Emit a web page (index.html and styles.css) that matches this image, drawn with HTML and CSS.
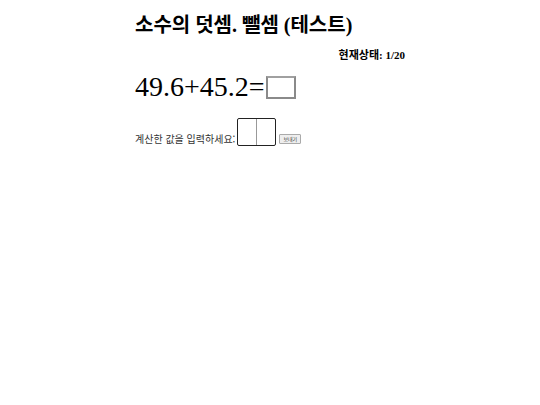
FILE: index.html
```html
<!DOCTYPE html>
<html lang="ko">
<head>
<meta charset="utf-8">
<title>소수의 덧셈. 뺄셈 (테스트)</title>
<link rel="stylesheet" href="styles.css">
</head>
<body>
<div class="wrap">
  <h1 class="title">소수의 덧셈. 뺄셈 (테스트)</h1>
  <div class="status">현재상태: 1/20</div>
  <div class="problem">49.6+45.2=<span class="blank"></span></div>
  <form class="answer">
    <label class="label">계산한 값을 입력하세요:</label>
    <span class="field"><span class="cell"></span><span class="cell"></span></span>
    <button type="button" class="send">보내기</button>
  </form>
</div>
</body>
</html>
```
FILE: styles.css
```css
body {
  margin: 8px;
  font-family: "Liberation Serif", "Noto Sans CJK KR", serif;
  background: #fff;
  color: #000;
}
.wrap {
  width: 270px;
  margin: 0 auto;
}
.title {
  font-size: 20px;
  font-weight: bold;
  margin: 2px 0 0;
  line-height: 30px;
}
.status {
  text-align: right;
  font-size: 11px;
  font-weight: bold;
  margin-top: 8px;
  line-height: 14px;
}
.problem {
  font-size: 28px;
  line-height: 32px;
  margin-top: 9px;
  display: flex;
  align-items: center;
}
.blank {
  display: inline-block;
  width: 26px;
  height: 19px;
  border: 2px solid #8a8a8a;
  border-top-color: #a0a0a0;
  margin-left: 1px;
}
.answer {
  display: flex;
  align-items: flex-end;
  margin-top: 15px;
}
.label {
  font-family: "Noto Sans CJK KR", sans-serif;
  font-size: 10px;
  color: #333;
  line-height: 12px;
  margin-bottom: 1px;
}
.field {
  display: flex;
  width: 37px;
  height: 26px;
  border: 1px solid #222;
  border-radius: 2px;
  margin-left: 2px;
}
.cell {
  flex: 1;
}
.cell + .cell {
  border-left: 1px solid #999;
}
.send {
  font-family: "Noto Sans CJK KR", sans-serif;
  font-size: 5px;
  line-height: 6px;
  padding: 1px 3px;
  margin-left: 3px;
  margin-bottom: 2px;
  background: #eee;
  border: 1px solid #aaa;
  border-radius: 1px;
  color: #333;
}
```
